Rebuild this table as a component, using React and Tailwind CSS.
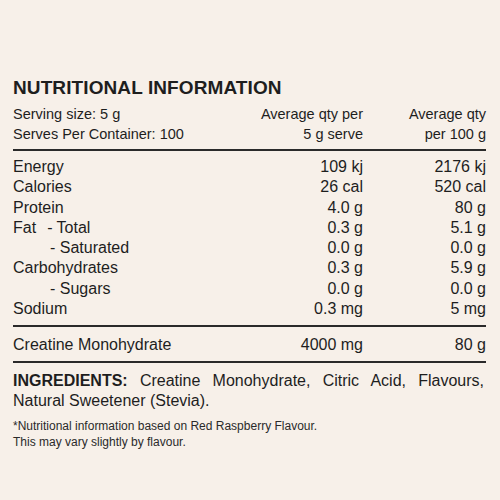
import React from 'react'

const rows = [
  { name: 'Energy', serve: '109 kj', hundred: '2176 kj' },
  { name: 'Calories', serve: '26 cal', hundred: '520 cal' },
  { name: 'Protein', serve: '4.0 g', hundred: '80 g' },
  { name: 'Fat', extra: '- Total', serve: '0.3 g', hundred: '5.1 g' },
  { name: '- Saturated', serve: '0.0 g', hundred: '0.0 g', sub: true },
  { name: 'Carbohydrates', serve: '0.3 g', hundred: '5.9 g' },
  { name: '- Sugars', serve: '0.0 g', hundred: '0.0 g', sub: true },
  { name: 'Sodium', serve: '0.3 mg', hundred: '5 mg' },
]

const App = () => {
  return (
    <div
      className="w-[500px] h-[500px] bg-[#f7f0e9] text-[#1e1e1e] pt-[76px] pl-[13px] pr-[14px]"
      style={{ fontFamily: '"Liberation Sans", Arial, sans-serif' }}
    >
      <h1 className="text-[19px] leading-[24px] font-bold tracking-[0.1px]">NUTRITIONAL INFORMATION</h1>

      <div className="grid grid-cols-[1fr_120px_123px] text-[14.5px] leading-[20px] mt-[4px]">
        <div>Serving size: 5 g</div>
        <div className="text-right">Average qty per</div>
        <div className="text-right">Average qty</div>
        <div>Serves Per Container: 100</div>
        <div className="text-right">5 g serve</div>
        <div className="text-right">per 100 g</div>
      </div>

      <div className="h-[2px] bg-[#2a2a2a] mt-[5px]" />

      <div className="grid grid-cols-[1fr_120px_123px] text-[16px] leading-[20.3px] mt-[6px]">
        {rows.map((r) => (
          <React.Fragment key={r.name}>
            <div className={r.sub ? 'pl-[37px]' : ''}>
              {r.name}
              {r.extra && <span className="ml-[11px]">{r.extra}</span>}
            </div>
            <div className="text-right">{r.serve}</div>
            <div className="text-right">{r.hundred}</div>
          </React.Fragment>
        ))}
      </div>

      <div className="h-[2px] bg-[#2a2a2a] mt-[6px]" />

      <div className="grid grid-cols-[1fr_120px_123px] text-[16px] leading-[20px] mt-[8px]">
        <div>Creatine Monohydrate</div>
        <div className="text-right">4000 mg</div>
        <div className="text-right">80 g</div>
      </div>

      <div className="h-[2px] bg-[#2a2a2a] mt-[6px]" />

      <p className="text-[16px] leading-[20px] mt-[8px] text-justify pr-[2px]">
        <span className="font-bold">INGREDIENTS:</span> Creatine Monohydrate, Citric Acid, Flavours, Natural Sweetener (Stevia).
      </p>

      <div className="text-[12px] leading-[16px] mt-[7px] text-[#2a2a2a]">
        <p>*Nutritional information based on Red Raspberry Flavour.</p>
        <p>This may vary slightly by flavour.</p>
      </div>
    </div>
  )
}

export default App
